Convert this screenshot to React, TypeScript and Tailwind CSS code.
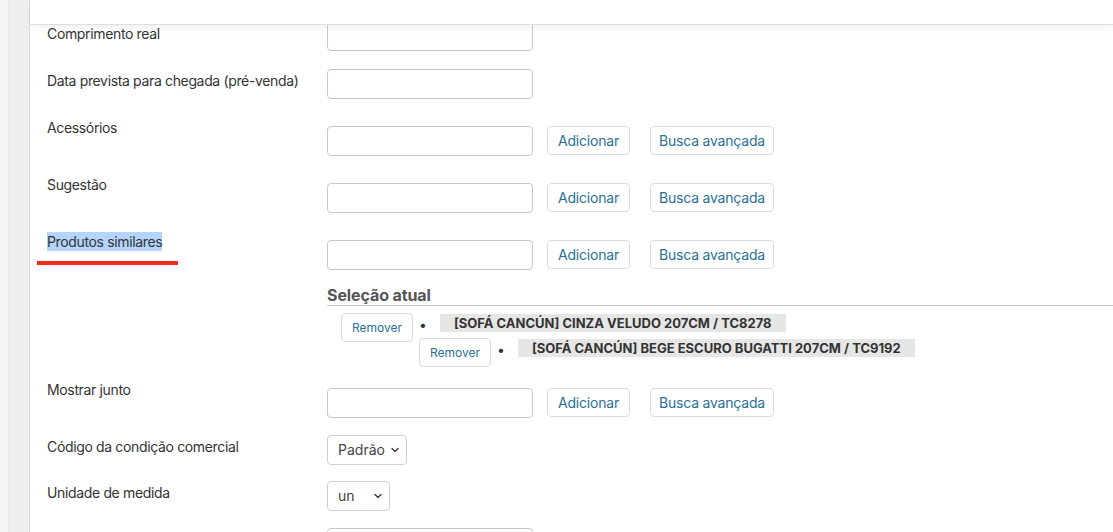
import { ChevronDown } from "lucide-react";

const font = { fontFamily: "Inter, 'Liberation Sans', sans-serif" };

function TextInput() {
  return <input className="block w-[206px] h-[30px] rounded-[4px] border border-[#c9c9c9] bg-white px-2 text-sm outline-none" />;
}

function Btn({ label, w }: { label: string; w: string }) {
  return (
    <button className={`${w} h-[29px] rounded-[4px] border border-[#dcdcdc] bg-white text-[14px] text-[#2a6f96] tracking-[-0.2px]`}>
      {label}
    </button>
  );
}

function LookupField() {
  return (
    <div className="flex items-start">
      <TextInput />
      <div className="ml-[14px]">
        <Btn label="Adicionar" w="w-[83px]" />
      </div>
      <div className="ml-[20px]">
        <Btn label="Busca avançada" w="w-[124px]" />
      </div>
    </div>
  );
}

function Label({ children, shift }: { children?: React.ReactNode; shift: string }) {
  return (
    <div className={`w-[280px] shrink-0 ${shift}`}>
      <span className="text-[14px] leading-5 text-[#333] tracking-[-0.35px]">{children}</span>
    </div>
  );
}

function Select({ value, w }: { value: string; w: string }) {
  return (
    <div className={`relative ${w} h-[30px]`}>
      <div className="h-full w-full rounded-[4px] border border-[#cfcfcf] bg-white pl-[10px] text-[14px] leading-[28px] text-[#444]">
        {value}
      </div>
      <ChevronDown size={12} strokeWidth={2.5} className="absolute right-[6px] top-[9px] text-[#333]" />
    </div>
  );
}

function Item({ text }: { text: string }) {
  return (
    <div className="flex items-start">
      <button className="w-[72px] h-[29px] shrink-0 rounded-[4px] border border-[#dcdcdc] bg-white text-[12px] text-[#2a6f96]">
        Remover
      </button>
      <span className="ml-[6px] mt-[4px] text-[14px] leading-4 text-[#333]">•</span>
      <span className="ml-[13px] mt-[1px] h-[18px] bg-[#e6e6e6] px-[14px] text-[13px] font-bold leading-[18px] text-[#333] whitespace-nowrap">
        {text}
      </span>
    </div>
  );
}

export default function App() {
  return (
    <div className="flex h-[532px] w-[1113px] overflow-hidden bg-white" style={font}>
      <div className="flex w-[30px] shrink-0">
        <div className="w-[9px] bg-[#f5f5f5] border-r border-[#e9e9e9]" />
        <div className="flex-1 bg-[#efefef] border-r border-[#dcdcdc]" />
      </div>

      <div className="relative flex-1 bg-white">
        <div className="absolute left-0 right-0 top-0 z-10 h-[25px] bg-white border-b border-[#dedede] shadow-[0_3px_8px_rgba(0,0,0,0.06)]" />

        <div className="pl-[17px] pt-[21px]">
          <div className="flex items-start">
            <Label shift="mt-0">Comprimento real</Label>
            <TextInput />
          </div>

          <div className="mt-[18px] flex items-start">
            <Label shift="-mt-[1px]">Data prevista para chegada (pré-venda)</Label>
            <TextInput />
          </div>

          <div className="mt-[19px] flex items-start">
            <Label shift="-mt-[3px]">Acessórios</Label>
            <div className="pt-[8px]">
              <LookupField />
            </div>
          </div>

          <div className="mt-[19px] flex items-start">
            <Label shift="-mt-[3px]">Sugestão</Label>
            <div className="pt-[8px]">
              <LookupField />
            </div>
          </div>

          <div className="mt-[19px] flex items-start">
            <div className="w-[280px] shrink-0 -mt-[3px]">
              <span className="bg-[#b4d5fe] py-px text-[14px] leading-5 text-[#333] tracking-[-0.35px]">Produtos similares</span>
              <div className="-ml-[10px] mt-[8px] h-[4px] w-[141px] bg-[#fb2b1b]" />
            </div>
            <div className="flex-1 pt-[8px]">
              <LookupField />
              <div className="mt-[15px] border-b border-[#cccccc]">
                <h3 className="text-[16px] font-bold leading-5 text-[#555] tracking-[-0.1px]">Seleção atual</h3>
              </div>
              <div className="ml-[14px] mt-[7px]">
                <Item text="[SOFÁ CANCÚN] CINZA VELUDO 207CM / TC8278" />
                <div className="-mt-[4px] ml-[78px]">
                  <Item text="[SOFÁ CANCÚN] BEGE ESCURO BUGATTI 207CM / TC9192" />
                </div>
              </div>
            </div>
          </div>

          <div className="mt-[13px] flex items-start">
            <Label shift="-mt-[3px]">Mostrar junto</Label>
            <div className="pt-[8px]">
              <LookupField />
            </div>
          </div>

          <div className="mt-[17px] flex items-start">
            <Label shift="-mt-[1px]">Código da condição comercial</Label>
            <Select value="Padrão" w="w-[80px]" />
          </div>

          <div className="mt-[16px] flex items-start">
            <Label shift="-mt-[1px]">Unidade de medida</Label>
            <Select value="un" w="w-[63px]" />
          </div>

          <div className="mt-[17px] flex items-start">
            <Label shift="mt-0" />
            <TextInput />
          </div>
        </div>
      </div>
    </div>
  );
}
